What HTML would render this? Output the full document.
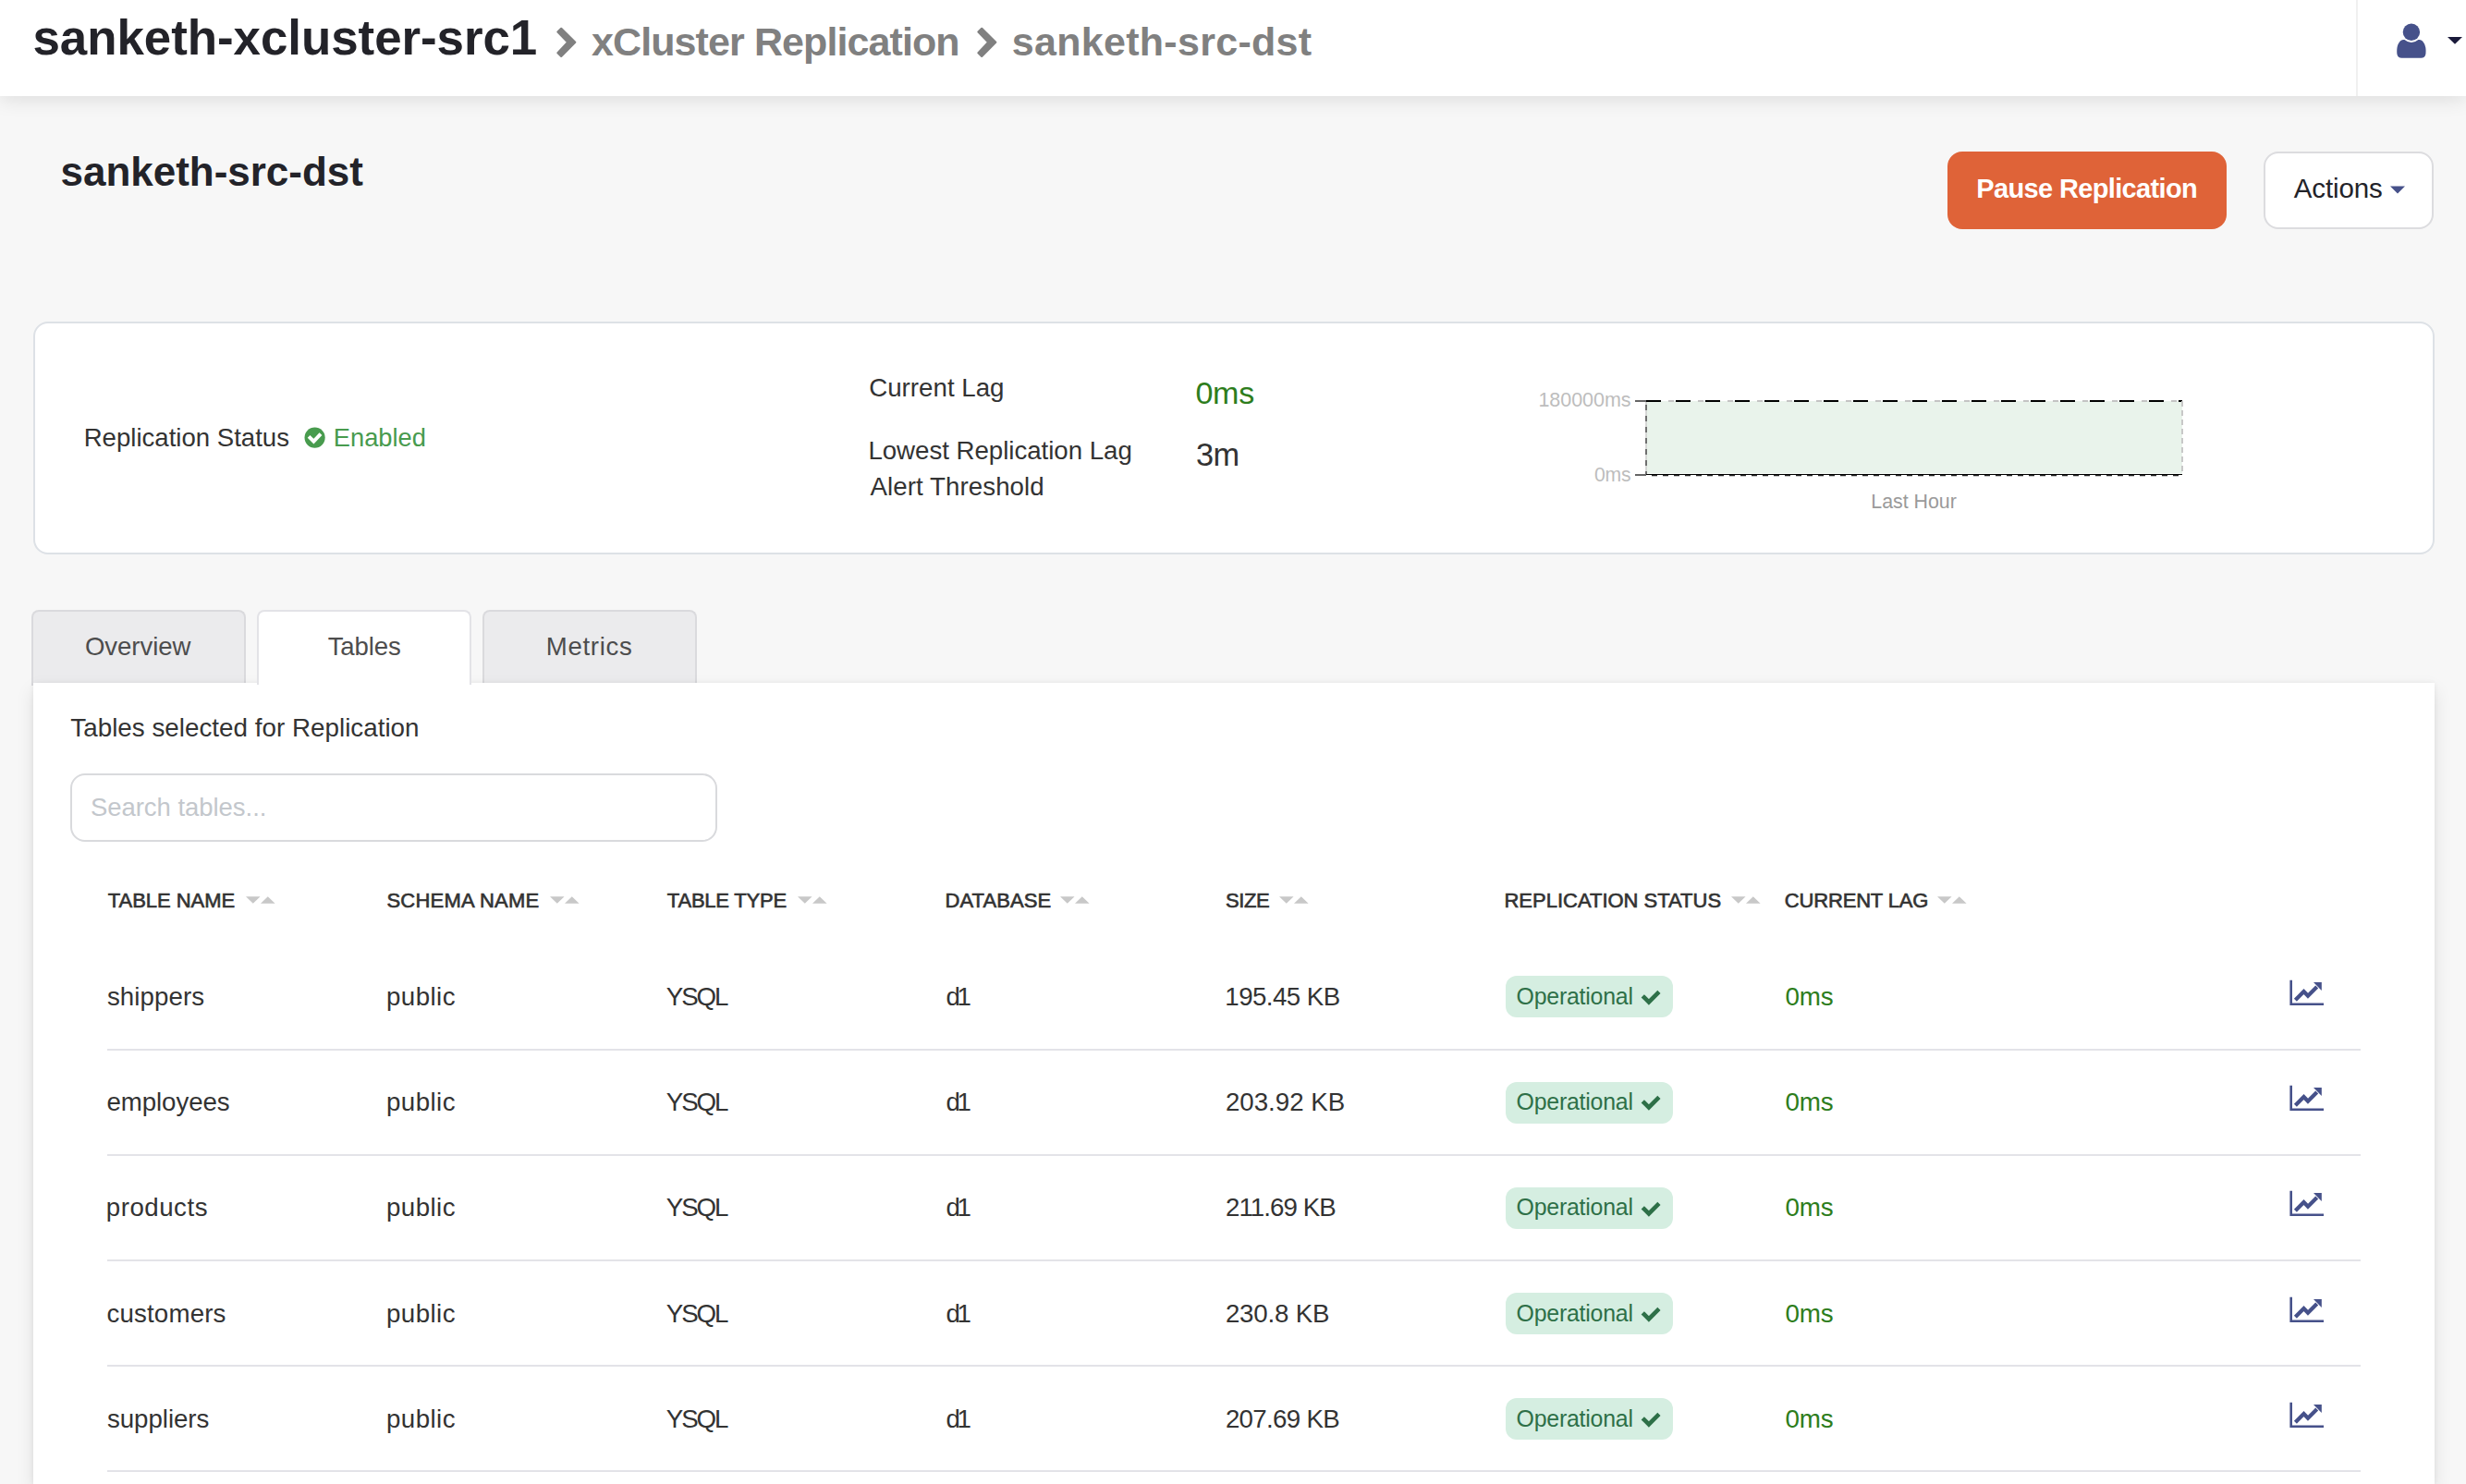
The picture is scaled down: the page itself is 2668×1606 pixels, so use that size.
<!DOCTYPE html>
<html><head><meta charset="utf-8"><title>xCluster Replication</title>
<style>
html,body{margin:0;padding:0;}
body{width:2668px;height:1606px;overflow:hidden;position:relative;background:#f7f7f7;font-family:"Liberation Sans",sans-serif;}
.t{position:absolute;line-height:1;white-space:nowrap;}
.abs{position:absolute;}
</style></head><body>
<!-- header -->
<div class="abs" style="left:0;top:0;width:2668px;height:104px;background:#ffffff;box-shadow:0 4px 20px rgba(0,0,0,0.105);z-index:0"></div>
<div class="abs" style="left:2549px;top:0;width:2px;height:104px;background:#f0f0f0"></div>
<svg class="abs" style="left:0;top:0" width="1200" height="104" viewBox="0 0 1200 104">
 <path d="M607.2,30.8 L622.3,45.7 L607.2,60.9 L603.4,57.2 L614.2,45.7 L603.4,34.5 Z" fill="#808080" stroke="#808080" stroke-width="2.2" stroke-linejoin="round"/>
 <path d="M1062.2,30.8 L1077.3,45.7 L1062.2,60.9 L1058.4,57.2 L1069.2,45.7 L1058.4,34.5 Z" fill="#808080" stroke="#808080" stroke-width="2.2" stroke-linejoin="round"/>
</svg>
<svg class="abs" style="left:2580px;top:20px" width="88" height="50" viewBox="0 0 88 50">
 <circle cx="28.9" cy="14.7" r="9.2" fill="#46518a"/>
 <path d="M20.2 22.9 Q21 22.9 21.5 23.1 A11.2 11.2 0 0 0 36.4 23.1 Q37 22.9 37.6 22.9 C41 23 43.5 27 44.3 31.5 C44.7 34 44.6 37 44.4 38.4 Q43.5 42.8 39.4 42.8 L18.5 42.8 Q14.3 42.8 13.4 38.4 C13.2 37 13.1 34 13.5 31.5 C14.3 27 16.8 23 20.2 22.9 Z" fill="#46518a"/>
 <path d="M68 19.9 H84 L76 27.7 Z" fill="#1a1a3a"/>
</svg>

<!-- buttons -->
<div class="abs" style="left:2107px;top:164px;width:302px;height:84px;background:#df6338;border-radius:16px"></div>
<div class="abs" style="left:2449px;top:164px;width:184px;height:83.5px;box-sizing:border-box;background:#fff;border:2px solid #dcdcdf;border-radius:16px"></div>
<svg class="abs" style="left:2580px;top:195px" width="30" height="20" viewBox="0 0 30 20"><path d="M6 6.5H22L14 14.6Z" fill="#46518a"/></svg>

<!-- status card -->
<div class="abs" style="left:36px;top:348px;width:2598px;height:252px;box-sizing:border-box;background:#fff;border:2px solid #dde1e6;border-radius:16px"></div>
<svg class="abs" style="left:320px;top:453px" width="42" height="42" viewBox="0 0 42 42">
 <circle cx="20.6" cy="20.6" r="11.1" fill="#489b4e"/>
 <polyline points="14.1,19.3 19.4,24.6 27,16.6" fill="none" stroke="#fff" stroke-width="3.9"/>
</svg>
<svg class="abs" style="left:1760px;top:420px" width="620" height="110" viewBox="1760 420 620 110">
 <rect x="1781" y="434" width="580" height="78.5" fill="#e9f3eb"/>
 <line x1="1769" y1="434" x2="1781" y2="434" stroke="#666" stroke-width="2"/>
 <line x1="1769" y1="514" x2="1781" y2="514" stroke="#666" stroke-width="2"/>
 <line x1="1781" y1="434" x2="2361" y2="434" stroke="#c4c4c4" stroke-width="2" stroke-dasharray="6 10" stroke-dashoffset="8"/>
 <line x1="1781" y1="434" x2="2361" y2="434" stroke="#000" stroke-width="2" stroke-dasharray="16 16"/>
 <line x1="1781" y1="435" x2="1781" y2="513" stroke="#cfcfcf" stroke-width="1.6"/>
 <line x1="1781" y1="435" x2="1781" y2="513" stroke="#555" stroke-width="1.6" stroke-dasharray="6 6" stroke-dashoffset="-3"/>
 <line x1="2361" y1="434" x2="2361" y2="513" stroke="#c8c8c8" stroke-width="2" stroke-dasharray="6 4"/>
 <line x1="1781" y1="513.5" x2="2361" y2="513.5" stroke="#000" stroke-width="1.2"/>
 <line x1="1781" y1="514.6" x2="2361" y2="514.6" stroke="#222" stroke-width="1.2" stroke-dasharray="6 6" stroke-dashoffset="-6"/>
</svg>

<!-- tabs -->
<div class="abs" style="left:34px;top:660px;width:232px;height:82px;box-sizing:border-box;background:#ebebed;border:2px solid #dadadd;border-bottom:none;border-radius:8px 8px 0 0"></div>
<div class="abs" style="left:522px;top:660px;width:231.5px;height:82px;box-sizing:border-box;background:#ebebed;border:2px solid #dadadd;border-bottom:none;border-radius:8px 8px 0 0"></div>

<!-- panel -->
<div class="abs" style="left:36px;top:739px;width:2598px;height:867px;background:#fff;box-shadow:0 0 5px rgba(0,0,0,0.06),0 8px 18px rgba(0,0,0,0.10)"></div>
<div class="abs" style="left:278px;top:660px;width:231.5px;height:81px;box-sizing:border-box;background:#fff;border:2px solid #e3e3e7;border-bottom:none;border-radius:8px 8px 0 0"></div>
<div class="abs" style="left:76px;top:837px;width:700px;height:74px;box-sizing:border-box;border:2px solid #d9dadd;border-radius:16px;background:#fff"></div>

<svg style="position:absolute;left:266.0px;top:970px" width="32" height="8" viewBox="0 0 32 8"><path d="M0 0.2H15.6L7.8 7.7Z M16 7.7H31.6L23.8 0.2Z" fill="#c8c8c8"/></svg>
<svg style="position:absolute;left:594.5px;top:970px" width="32" height="8" viewBox="0 0 32 8"><path d="M0 0.2H15.6L7.8 7.7Z M16 7.7H31.6L23.8 0.2Z" fill="#c8c8c8"/></svg>
<svg style="position:absolute;left:862.8px;top:970px" width="32" height="8" viewBox="0 0 32 8"><path d="M0 0.2H15.6L7.8 7.7Z M16 7.7H31.6L23.8 0.2Z" fill="#c8c8c8"/></svg>
<svg style="position:absolute;left:1147.4px;top:970px" width="32" height="8" viewBox="0 0 32 8"><path d="M0 0.2H15.6L7.8 7.7Z M16 7.7H31.6L23.8 0.2Z" fill="#c8c8c8"/></svg>
<svg style="position:absolute;left:1384.4px;top:970px" width="32" height="8" viewBox="0 0 32 8"><path d="M0 0.2H15.6L7.8 7.7Z M16 7.7H31.6L23.8 0.2Z" fill="#c8c8c8"/></svg>
<svg style="position:absolute;left:1872.5px;top:970px" width="32" height="8" viewBox="0 0 32 8"><path d="M0 0.2H15.6L7.8 7.7Z M16 7.7H31.6L23.8 0.2Z" fill="#c8c8c8"/></svg>
<svg style="position:absolute;left:2096.4px;top:970px" width="32" height="8" viewBox="0 0 32 8"><path d="M0 0.2H15.6L7.8 7.7Z M16 7.7H31.6L23.8 0.2Z" fill="#c8c8c8"/></svg>
<div style="position:absolute;left:1628.7px;top:1056.2px;width:181.3px;height:45px;background:#d5eee1;border-radius:12px"></div>
<svg style="position:absolute;left:1770px;top:1068.0px" width="32" height="24" viewBox="0 0 32 24"><polyline points="8.9,11.4 13.9,16.4 23.3,7" fill="none" stroke="#2e7048" stroke-width="4.6" stroke-linecap="square" stroke-linejoin="miter"/></svg>
<svg style="position:absolute;left:2470px;top:1059.7px" width="50" height="32" viewBox="0 0 50 32"><path d="M7.4 4.8H10V29.5H44V32H7.4Z" fill="#46518a" transform="translate(0,-4)"/><polyline points="13.4,22.3 22.5,13 27,17.8 36.7,8.1" fill="none" stroke="#46518a" stroke-width="4.2" transform="translate(0,0)"/><path d="M33 3.1H41.8V11.9Z" fill="#46518a"/></svg>
<div style="position:absolute;left:116px;top:1135.00px;width:2438px;height:2px;background:#e3e3e8"></div>
<div style="position:absolute;left:1628.7px;top:1170.5px;width:181.3px;height:45px;background:#d5eee1;border-radius:12px"></div>
<svg style="position:absolute;left:1770px;top:1182.2px" width="32" height="24" viewBox="0 0 32 24"><polyline points="8.9,11.4 13.9,16.4 23.3,7" fill="none" stroke="#2e7048" stroke-width="4.6" stroke-linecap="square" stroke-linejoin="miter"/></svg>
<svg style="position:absolute;left:2470px;top:1174.0px" width="50" height="32" viewBox="0 0 50 32"><path d="M7.4 4.8H10V29.5H44V32H7.4Z" fill="#46518a" transform="translate(0,-4)"/><polyline points="13.4,22.3 22.5,13 27,17.8 36.7,8.1" fill="none" stroke="#46518a" stroke-width="4.2" transform="translate(0,0)"/><path d="M33 3.1H41.8V11.9Z" fill="#46518a"/></svg>
<div style="position:absolute;left:116px;top:1249.00px;width:2438px;height:2px;background:#e3e3e8"></div>
<div style="position:absolute;left:1628.7px;top:1284.7px;width:181.3px;height:45px;background:#d5eee1;border-radius:12px"></div>
<svg style="position:absolute;left:1770px;top:1296.5px" width="32" height="24" viewBox="0 0 32 24"><polyline points="8.9,11.4 13.9,16.4 23.3,7" fill="none" stroke="#2e7048" stroke-width="4.6" stroke-linecap="square" stroke-linejoin="miter"/></svg>
<svg style="position:absolute;left:2470px;top:1288.2px" width="50" height="32" viewBox="0 0 50 32"><path d="M7.4 4.8H10V29.5H44V32H7.4Z" fill="#46518a" transform="translate(0,-4)"/><polyline points="13.4,22.3 22.5,13 27,17.8 36.7,8.1" fill="none" stroke="#46518a" stroke-width="4.2" transform="translate(0,0)"/><path d="M33 3.1H41.8V11.9Z" fill="#46518a"/></svg>
<div style="position:absolute;left:116px;top:1363.00px;width:2438px;height:2px;background:#e3e3e8"></div>
<div style="position:absolute;left:1628.7px;top:1399.0px;width:181.3px;height:45px;background:#d5eee1;border-radius:12px"></div>
<svg style="position:absolute;left:1770px;top:1410.8px" width="32" height="24" viewBox="0 0 32 24"><polyline points="8.9,11.4 13.9,16.4 23.3,7" fill="none" stroke="#2e7048" stroke-width="4.6" stroke-linecap="square" stroke-linejoin="miter"/></svg>
<svg style="position:absolute;left:2470px;top:1402.5px" width="50" height="32" viewBox="0 0 50 32"><path d="M7.4 4.8H10V29.5H44V32H7.4Z" fill="#46518a" transform="translate(0,-4)"/><polyline points="13.4,22.3 22.5,13 27,17.8 36.7,8.1" fill="none" stroke="#46518a" stroke-width="4.2" transform="translate(0,0)"/><path d="M33 3.1H41.8V11.9Z" fill="#46518a"/></svg>
<div style="position:absolute;left:116px;top:1477.00px;width:2438px;height:2px;background:#e3e3e8"></div>
<div style="position:absolute;left:1628.7px;top:1513.2px;width:181.3px;height:45px;background:#d5eee1;border-radius:12px"></div>
<svg style="position:absolute;left:1770px;top:1525.0px" width="32" height="24" viewBox="0 0 32 24"><polyline points="8.9,11.4 13.9,16.4 23.3,7" fill="none" stroke="#2e7048" stroke-width="4.6" stroke-linecap="square" stroke-linejoin="miter"/></svg>
<svg style="position:absolute;left:2470px;top:1516.7px" width="50" height="32" viewBox="0 0 50 32"><path d="M7.4 4.8H10V29.5H44V32H7.4Z" fill="#46518a" transform="translate(0,-4)"/><polyline points="13.4,22.3 22.5,13 27,17.8 36.7,8.1" fill="none" stroke="#46518a" stroke-width="4.2" transform="translate(0,0)"/><path d="M33 3.1H41.8V11.9Z" fill="#46518a"/></svg>
<div style="position:absolute;left:116px;top:1591.00px;width:2438px;height:2px;background:#e3e3e8"></div>
<div class="t" style="left:35.41px;top:15.22px;font-size:52.9px;font-weight:700;color:#232329;letter-spacing:-0.046px;">sanketh-xcluster-src1</div>
<div class="t" style="left:640.00px;top:23.60px;font-size:43px;font-weight:700;color:#808080;letter-spacing:-0.903px;">xCluster Replication</div>
<div class="t" style="left:1094.71px;top:23.60px;font-size:43px;font-weight:700;color:#808080;letter-spacing:0.301px;">sanketh-src-dst</div>
<div class="t" style="left:65.48px;top:164.05px;font-size:44px;font-weight:700;color:#232329;letter-spacing:-0.015px;">sanketh-src-dst</div>
<div class="t" style="left:2138.26px;top:189.85px;font-size:29px;font-weight:700;color:#ffffff;letter-spacing:-0.643px;">Pause Replication</div>
<div class="t" style="left:2481.80px;top:189.43px;font-size:29.5px;font-weight:400;color:#232329;letter-spacing:-0.142px;">Actions</div>
<div class="t" style="left:90.69px;top:459.64px;font-size:27.6px;font-weight:400;color:#333333;letter-spacing:-0.007px;">Replication Status</div>
<div class="t" style="left:360.82px;top:459.89px;font-size:27.3px;font-weight:400;color:#489b4e;letter-spacing:-0.029px;">Enabled</div>
<div class="t" style="left:940.22px;top:406.25px;font-size:27.7px;font-weight:400;color:#333333;letter-spacing:0.006px;">Current Lag</div>
<div class="t" style="left:1293.38px;top:407.93px;font-size:34.1px;font-weight:400;color:#2d7d1c;letter-spacing:-0.287px;">0ms</div>
<div class="t" style="left:939.38px;top:473.75px;font-size:27.7px;font-weight:400;color:#333333;letter-spacing:-0.040px;">Lowest Replication Lag</div>
<div class="t" style="left:941.60px;top:512.65px;font-size:27.7px;font-weight:400;color:#333333;letter-spacing:0.059px;">Alert Threshold</div>
<div class="t" style="left:1293.97px;top:474.58px;font-size:34.4px;font-weight:400;color:#333333;letter-spacing:-0.588px;">3m</div>
<div class="t" style="left:1664.39px;top:423.10px;font-size:21.5px;font-weight:400;color:#bdbdbd;letter-spacing:-0.022px;">180000ms</div>
<div class="t" style="left:1725.06px;top:502.55px;font-size:21.2px;font-weight:400;color:#bdbdbd;letter-spacing:-0.239px;">0ms</div>
<div class="t" style="left:2024.29px;top:532.88px;font-size:21.4px;font-weight:400;color:#9a9a9a;letter-spacing:-0.024px;">Last Hour</div>
<div class="t" style="left:91.90px;top:686.44px;font-size:27.6px;font-weight:400;color:#4d4d4d;letter-spacing:-0.062px;">Overview</div>
<div class="t" style="left:354.65px;top:686.44px;font-size:27.6px;font-weight:400;color:#4d4d4d;letter-spacing:-0.100px;">Tables</div>
<div class="t" style="left:590.79px;top:686.44px;font-size:27.6px;font-weight:400;color:#4d4d4d;letter-spacing:0.684px;">Metrics</div>
<div class="t" style="left:76.34px;top:773.97px;font-size:27.8px;font-weight:400;color:#333333;letter-spacing:0.006px;">Tables selected for Replication</div>
<div class="t" style="left:97.90px;top:859.92px;font-size:27.5px;font-weight:400;color:#c3c7cc;letter-spacing:-0.037px;">Search tables...</div>
<div class="t" style="left:116.76px;top:964.08px;font-size:22.0px;font-weight:400;color:#333333;letter-spacing:-0.042px;-webkit-text-stroke:0.65px #333;">TABLE NAME</div>
<div class="t" style="left:418.42px;top:964.08px;font-size:22.0px;font-weight:400;color:#333333;letter-spacing:0.220px;-webkit-text-stroke:0.65px #333;">SCHEMA NAME</div>
<div class="t" style="left:721.86px;top:964.08px;font-size:22.0px;font-weight:400;color:#333333;letter-spacing:-0.220px;-webkit-text-stroke:0.65px #333;">TABLE TYPE</div>
<div class="t" style="left:1022.54px;top:964.08px;font-size:22.0px;font-weight:400;color:#333333;letter-spacing:0.067px;-webkit-text-stroke:0.65px #333;">DATABASE</div>
<div class="t" style="left:1326.12px;top:964.08px;font-size:22.0px;font-weight:400;color:#333333;letter-spacing:-0.468px;-webkit-text-stroke:0.65px #333;">SIZE</div>
<div class="t" style="left:1627.44px;top:964.08px;font-size:22.0px;font-weight:400;color:#333333;letter-spacing:-0.001px;-webkit-text-stroke:0.65px #333;">REPLICATION STATUS</div>
<div class="t" style="left:1930.80px;top:964.08px;font-size:22.0px;font-weight:400;color:#333333;letter-spacing:-0.179px;-webkit-text-stroke:0.65px #333;">CURRENT LAG</div>
<div class="t" style="left:115.95px;top:1064.95px;font-size:27.7px;font-weight:400;color:#333333;letter-spacing:0.069px;">shippers</div>
<div class="t" style="left:417.94px;top:1064.95px;font-size:27.7px;font-weight:400;color:#333333;letter-spacing:0.448px;">public</div>
<div class="t" style="left:720.75px;top:1064.95px;font-size:27.7px;font-weight:400;color:#333333;letter-spacing:-2.041px;">YSQL</div>
<div class="t" style="left:1023.59px;top:1064.95px;font-size:27.7px;font-weight:400;color:#333333;letter-spacing:-3.424px;">d1</div>
<div class="t" style="left:1325.36px;top:1064.95px;font-size:27.7px;font-weight:400;color:#333333;letter-spacing:-0.566px;">195.45 KB</div>
<div class="t" style="left:1640.50px;top:1065.82px;font-size:24.9px;font-weight:400;color:#2e7048;letter-spacing:-0.219px;">Operational</div>
<div class="t" style="left:1931.57px;top:1064.87px;font-size:27.8px;font-weight:400;color:#2d7d1c;letter-spacing:-0.275px;">0ms</div>
<div class="t" style="left:115.39px;top:1179.20px;font-size:27.7px;font-weight:400;color:#333333;letter-spacing:-0.077px;">employees</div>
<div class="t" style="left:417.94px;top:1179.20px;font-size:27.7px;font-weight:400;color:#333333;letter-spacing:0.448px;">public</div>
<div class="t" style="left:720.75px;top:1179.20px;font-size:27.7px;font-weight:400;color:#333333;letter-spacing:-2.041px;">YSQL</div>
<div class="t" style="left:1023.59px;top:1179.20px;font-size:27.7px;font-weight:400;color:#333333;letter-spacing:-3.424px;">d1</div>
<div class="t" style="left:1325.91px;top:1179.20px;font-size:27.7px;font-weight:400;color:#333333;letter-spacing:-0.010px;">203.92 KB</div>
<div class="t" style="left:1640.50px;top:1180.07px;font-size:24.9px;font-weight:400;color:#2e7048;letter-spacing:-0.219px;">Operational</div>
<div class="t" style="left:1931.57px;top:1179.12px;font-size:27.8px;font-weight:400;color:#2d7d1c;letter-spacing:-0.275px;">0ms</div>
<div class="t" style="left:114.84px;top:1293.45px;font-size:27.7px;font-weight:400;color:#333333;letter-spacing:0.493px;">products</div>
<div class="t" style="left:417.94px;top:1293.45px;font-size:27.7px;font-weight:400;color:#333333;letter-spacing:0.448px;">public</div>
<div class="t" style="left:720.75px;top:1293.45px;font-size:27.7px;font-weight:400;color:#333333;letter-spacing:-2.041px;">YSQL</div>
<div class="t" style="left:1023.59px;top:1293.45px;font-size:27.7px;font-weight:400;color:#333333;letter-spacing:-3.424px;">d1</div>
<div class="t" style="left:1325.91px;top:1293.45px;font-size:27.7px;font-weight:400;color:#333333;letter-spacing:-0.928px;">211.69 KB</div>
<div class="t" style="left:1640.50px;top:1294.32px;font-size:24.9px;font-weight:400;color:#2e7048;letter-spacing:-0.219px;">Operational</div>
<div class="t" style="left:1931.57px;top:1293.37px;font-size:27.8px;font-weight:400;color:#2d7d1c;letter-spacing:-0.275px;">0ms</div>
<div class="t" style="left:115.39px;top:1407.70px;font-size:27.7px;font-weight:400;color:#333333;letter-spacing:0.172px;">customers</div>
<div class="t" style="left:417.94px;top:1407.70px;font-size:27.7px;font-weight:400;color:#333333;letter-spacing:0.448px;">public</div>
<div class="t" style="left:720.75px;top:1407.70px;font-size:27.7px;font-weight:400;color:#333333;letter-spacing:-2.041px;">YSQL</div>
<div class="t" style="left:1023.59px;top:1407.70px;font-size:27.7px;font-weight:400;color:#333333;letter-spacing:-3.424px;">d1</div>
<div class="t" style="left:1325.91px;top:1407.70px;font-size:27.7px;font-weight:400;color:#333333;letter-spacing:-0.197px;">230.8 KB</div>
<div class="t" style="left:1640.50px;top:1408.57px;font-size:24.9px;font-weight:400;color:#2e7048;letter-spacing:-0.219px;">Operational</div>
<div class="t" style="left:1931.57px;top:1407.62px;font-size:27.8px;font-weight:400;color:#2d7d1c;letter-spacing:-0.275px;">0ms</div>
<div class="t" style="left:115.95px;top:1521.95px;font-size:27.7px;font-weight:400;color:#333333;letter-spacing:-0.046px;">suppliers</div>
<div class="t" style="left:417.94px;top:1521.95px;font-size:27.7px;font-weight:400;color:#333333;letter-spacing:0.448px;">public</div>
<div class="t" style="left:720.75px;top:1521.95px;font-size:27.7px;font-weight:400;color:#333333;letter-spacing:-2.041px;">YSQL</div>
<div class="t" style="left:1023.59px;top:1521.95px;font-size:27.7px;font-weight:400;color:#333333;letter-spacing:-3.424px;">d1</div>
<div class="t" style="left:1325.91px;top:1521.95px;font-size:27.7px;font-weight:400;color:#333333;letter-spacing:-0.685px;">207.69 KB</div>
<div class="t" style="left:1640.50px;top:1522.82px;font-size:24.9px;font-weight:400;color:#2e7048;letter-spacing:-0.219px;">Operational</div>
<div class="t" style="left:1931.57px;top:1521.87px;font-size:27.8px;font-weight:400;color:#2d7d1c;letter-spacing:-0.275px;">0ms</div>
</body></html>
